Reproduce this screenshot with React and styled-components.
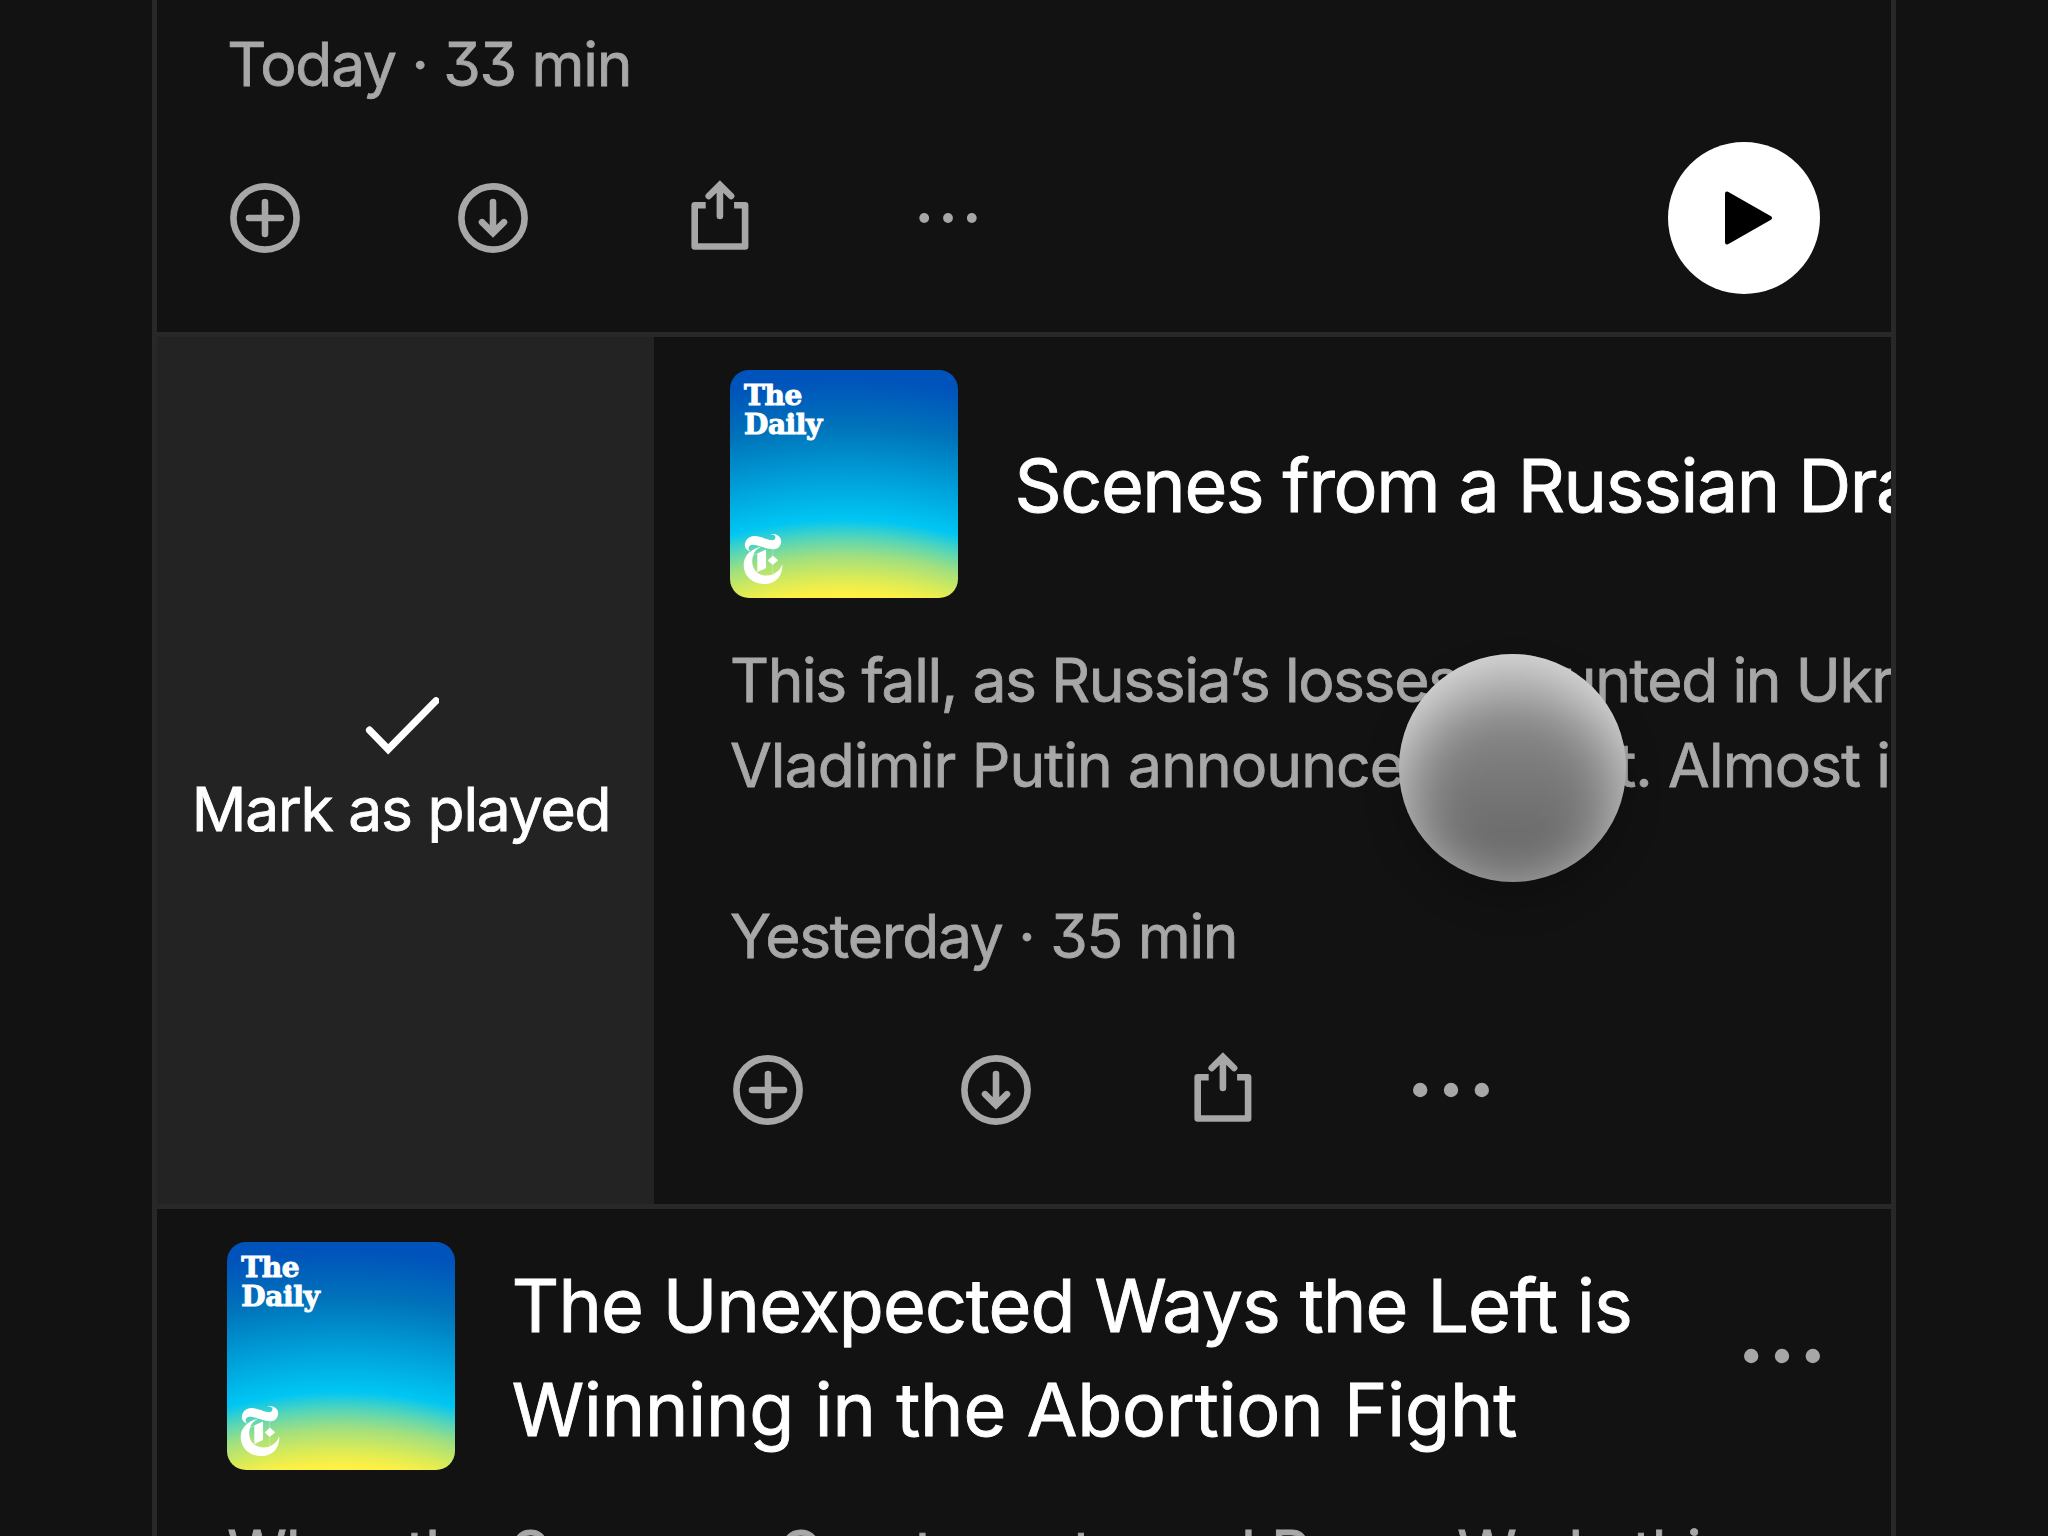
import React from 'react';
import styled, { createGlobalStyle } from 'styled-components';
import { SiNewyorktimes } from 'react-icons/si';

function Plus() {
  return (
    <Icon viewBox="0 0 76 76">
      <circle cx="38" cy="38" r="31.6" />
      <path d="M38 22v32M22 38h32" strokeLinecap="round" />
    </Icon>
  );
}

function Download() {
  return (
    <Icon viewBox="0 0 76 76">
      <circle cx="38" cy="38" r="31.6" />
      <path d="M38 22v29M27 42.2l11 11 11-11" strokeLinecap="round" />
    </Icon>
  );
}

function Share() {
  return (
    <Icon viewBox="0 0 76 76">
      <path d="M23.7 25.3h-11v41.2h50.4V25.3h-11" strokeLinejoin="round" />
      <path d="M37.9 36v-30M26.7 16l11.2-11.2L49.1 16" strokeLinecap="round" />
    </Icon>
  );
}

function More({ small }) {
  const r = small ? 4.9 : 7.2;
  const gap = small ? 23.8 : 30.8;
  return (
    <Dots viewBox="0 0 76 76">
      <circle cx={38 - gap} cy="38" r={r} />
      <circle cx="38" cy="38" r={r} />
      <circle cx={38 + gap} cy="38" r={r} />
    </Dots>
  );
}

function Actions({ smallMore, playable }) {
  return (
    <ActionBar>
      <IconGroup>
        <Plus />
        <Download />
        <Share />
        <More small={smallMore} />
      </IconGroup>
      {playable && (
        <PlayButton>
          <svg width="50" height="58" viewBox="0 0 50 58">
            <path d="M3 4.5v49L46 29z" fill="#000" stroke="#000" strokeWidth="4" strokeLinejoin="round" />
          </svg>
        </PlayButton>
      )}
    </ActionBar>
  );
}

function Cover() {
  return (
    <CoverArt>
      <CoverTitle>The<br />Daily</CoverTitle>
      <SiNewyorktimes size={50} color="#fff" />
    </CoverArt>
  );
}

function App() {
  return (
    <Page>
      <GlobalStyle />
      <Feed>
        <FirstEpisode>
          <Meta>Today · 33 min</Meta>
          <Actions smallMore playable />
        </FirstEpisode>
        <SwipedEpisode>
          <SwipeAction>
            <svg width="76" height="62" viewBox="0 0 76 62">
              <path d="M6.6 33.2l18.6 19L73 3.8" fill="none" stroke="#fff" strokeWidth="7.3" strokeLinecap="round" />
            </svg>
            <SwipeLabel>Mark as played</SwipeLabel>
          </SwipeAction>
          <SwipeContent>
            <Header>
              <Cover />
              <Title>
                <Line $tracking={-1.38}>Scenes from a Russian Draft Office</Line>
              </Title>
            </Header>
            <Description>
              <Line $tracking={-1.38}>This fall, as Russia’s losses mounted in Ukraine,</Line>
              <Line $tracking={-0.87}>Vladimir Putin announced a draft. Almost immediately</Line>
            </Description>
            <Meta>Yesterday · 35 min</Meta>
            <Actions />
          </SwipeContent>
          <Touch />
        </SwipedEpisode>
        <Episode>
          <Header>
            <Cover />
            <Title>
              <Line $tracking={-0.86}>The Unexpected Ways the Left is</Line>
              <Line $tracking={-0.14}>Winning in the Abortion Fight</Line>
            </Title>
            <HeaderMore>
              <More />
            </HeaderMore>
          </Header>
          <Description>
            <Line $tracking={-0.87}>When the Supreme Court overturned Roe v. Wade this</Line>
          </Description>
        </Episode>
      </Feed>
    </Page>
  );
}

const GlobalStyle = createGlobalStyle`
  body {
    margin: 0;
    background: #121212;
    font-family: Inter, "Liberation Sans", sans-serif;
    font-weight: 400;
    font-feature-settings: "cv09";
    -webkit-text-stroke: 0.8px currentColor;
  }
`;

const Page = styled.div`
  box-sizing: border-box;
  width: 2048px;
  height: 1536px;
  padding-left: 152px;
  overflow: hidden;
  background: #121212;
`;

const Feed = styled.div`
  box-sizing: border-box;
  width: 1744px;
  height: 1536px;
  overflow: hidden;
  border: solid #282828;
  border-width: 0 5px;
`;

const Episode = styled.div`
  box-sizing: border-box;
  padding: 33px 70.8px 0 70.3px;
`;

const FirstEpisode = styled(Episode)`
  height: 337px;
  padding-top: 22px;
  border-bottom: 5px solid #282828;
`;

const SwipedEpisode = styled.div`
  position: relative;
  display: flex;
  box-sizing: border-box;
  height: 872px;
  border-bottom: 5px solid #282828;
`;

const SwipeAction = styled.div`
  display: flex;
  flex: none;
  flex-direction: column;
  align-items: center;
  box-sizing: border-box;
  width: 497px;
  padding: 360px 9px 0 0;
  background: #232323;
`;

const SwipeLabel = styled.span`
  margin-top: 8px;
  color: #fff;
  font-size: 60.5px;
  line-height: 85.33px;
  letter-spacing: -1.2px;
  white-space: nowrap;
`;

const SwipeContent = styled.div`
  flex: 1;
  min-width: 0;
  padding: 33px 0 0 76px;
  overflow: hidden;
`;

const Header = styled.div`
  display: flex;
  align-items: center;
`;

const CoverArt = styled.div`
  display: flex;
  flex: none;
  flex-direction: column;
  justify-content: space-between;
  box-sizing: border-box;
  width: 227.5px;
  height: 227.5px;
  padding: 11px 0 13.5px 8px;
  border-radius: 19px;
  background: radial-gradient(
    circle at 50% 256%,
    #fff044 360px,
    #d9eb57 376px,
    #a3e07e 397px,
    #5ad6b4 415px,
    #00c6f4 434px,
    #00a4dc 472px,
    #0072ba 528px,
    #0053bb 575px
  );
`;

const CoverTitle = styled.div`
  margin-left: 6px;
  color: #fff;
  font-family: "DejaVu Serif", serif;
  font-size: 28px;
  font-weight: 700;
  line-height: 29px;
  letter-spacing: -0.4px;
  -webkit-text-stroke: 1px #fff;
`;

const Title = styled.h2`
  flex: 1;
  margin: 5px 0 0 57px;
  color: #fff;
  font-size: 73.5px;
  font-weight: 400;
  line-height: 104.33px;
  white-space: nowrap;
  -webkit-text-stroke: 0.9px currentColor;
`;

const Line = styled.span`
  display: block;
  letter-spacing: ${(p) => p.$tracking}px;
`;

const HeaderMore = styled.div`
  display: flex;
  flex: none;
`;

const Description = styled.p`
  margin: 40.3px 0 86px;
  color: #a7a7a7;
  font-size: 60.5px;
  line-height: 85.33px;
  white-space: nowrap;
`;

const Meta = styled.div`
  margin-bottom: 34.7px;
  color: #a7a7a7;
  font-size: 60.5px;
  line-height: 85.33px;
  letter-spacing: -1.27px;
`;

const ActionBar = styled.div`
  display: flex;
  align-items: center;
  justify-content: space-between;
  height: 152px;
`;

const IconGroup = styled.div`
  display: flex;
  gap: 151.5px;
`;

const Icon = styled.svg`
  display: block;
  width: 76px;
  height: 76px;
  overflow: visible;
  fill: none;
  stroke: #a7a7a7;
  stroke-width: 6.6;
`;

const Dots = styled.svg`
  display: block;
  width: 76px;
  height: 76px;
  overflow: visible;
  fill: #a7a7a7;
`;

const PlayButton = styled.button`
  display: flex;
  align-items: center;
  justify-content: center;
  width: 152px;
  height: 152px;
  padding: 0 0 0 9px;
  border: 0;
  border-radius: 50%;
  background: #fff;
`;

// finger that drags the row, floats over the text
const Touch = styled.div`
  position: absolute;
  top: 317px;
  left: 1241.7px;
  width: 227.5px;
  height: 227.5px;
  border-radius: 50%;
  background: linear-gradient(#8a8a8a 20%, #6c6c6c 80%);
  box-shadow:
    inset 0 22px 66px rgba(255, 255, 255, 0.75),
    0 19px 38px rgba(0, 0, 0, 0.2);
`;

export default App;
